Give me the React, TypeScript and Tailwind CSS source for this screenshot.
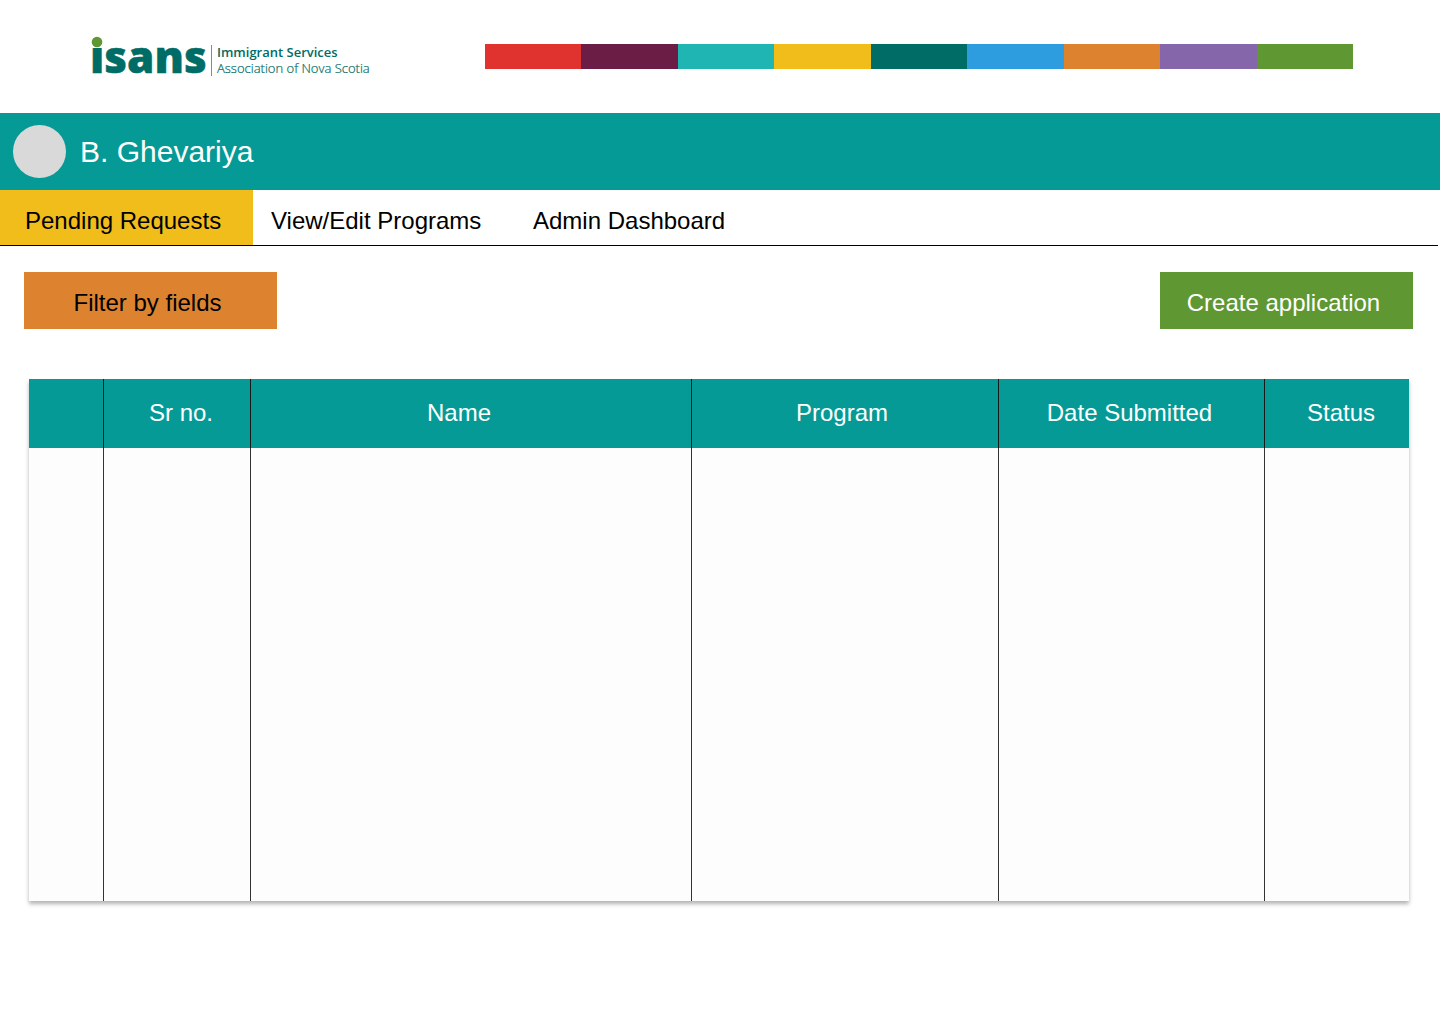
import React from "react";

const stripColors = [
  "bg-[#e0332f]",
  "bg-[#6c1d45]",
  "bg-[#1fb5b3]",
  "bg-[#f0bd1a]",
  "bg-[#006c66]",
  "bg-[#2d9de0]",
  "bg-[#dd8330]",
  "bg-[#8666aa]",
  "bg-[#5f9732]",
];

const columns = [
  { title: "", width: "w-[75px]", pad: "" },
  { title: "Sr no.", width: "w-[147px]", pad: "pl-2" },
  { title: "Name", width: "", pad: "pr-6" },
  { title: "Program", width: "w-[307px]", pad: "pr-1.5" },
  { title: "Date Submitted", width: "w-[266px]", pad: "pr-1" },
  { title: "Status", width: "w-[144px]", pad: "pl-2" },
];

function Logo() {
  return (
    <svg
      viewBox="0 0 280 60"
      className="h-[60px] w-[280px] shrink-0 overflow-visible"
      role="img"
      aria-label="isans, Immigrant Services Association of Nova Scotia"
    >
      <text
        x="-1"
        y="46"
        fill="#006c66"
        stroke="#006c66"
        strokeWidth="0.5"
        fontSize="44"
        fontWeight="800"
        fontFamily="'Open Sans', 'Noto Sans', sans-serif"
      >
        isans
      </text>
      <rect x="0" y="8" width="13" height="13" fill="#ffffff" />
      <circle cx="6" cy="15" r="5.3" fill="#5f9732" />
      <rect x="120" y="18" width="1" height="31" fill="#5f9c98" />
      <text
        x="126"
        y="30"
        fill="#006c66"
        fontSize="13"
        fontWeight="600"
        fontFamily="'Open Sans', 'Noto Sans', sans-serif"
      >
        Immigrant Services
      </text>
      <text
        x="126"
        y="46"
        fill="#006c66"
        stroke="#006c66"
        strokeWidth="0.2"
        fontSize="13"
        fontWeight="300"
        fontFamily="'Open Sans', 'Noto Sans', sans-serif"
      >
        Association of Nova Scotia
      </text>
    </svg>
  );
}

export default function App() {
  return (
    <div className="min-h-screen bg-white font-['Liberation_Sans',Arial,sans-serif] text-2xl text-black">
      <header className="flex h-[113px] items-center pr-[87px] pl-[91px]">
        <Logo />
        <div className="ml-[114px] flex h-[25px] flex-1">
          {stripColors.map((color) => (
            <div key={color} className={`flex-1 ${color}`} />
          ))}
        </div>
      </header>

      <section className="flex h-[77px] items-center gap-[14px] bg-[#069a96] px-[13px] text-white">
        <div className="size-[53px] rounded-full bg-[#d9d9d9]" />
        <h1 className="text-3xl">B. Ghevariya</h1>
      </section>

      <nav className="mr-0.5 flex h-14 border-b border-black">
        <a href="#pending" aria-current="page" className="flex w-[253px] items-center bg-[#f0bd1a] pt-1.5 pl-[25px]">
          Pending Requests
        </a>
        <a href="#programs" className="flex w-[262px] items-center pt-1.5 pl-[18px]">
          View/Edit Programs
        </a>
        <a href="#dashboard" className="flex items-center pt-1.5 pl-[18px]">
          Admin Dashboard
        </a>
      </nav>

      <main>
        <div className="mt-[26px] flex justify-between pr-[27px] pl-6">
          <button type="button" className="h-[57px] w-[253px] bg-[#dd8330] pt-1 pr-1.5">
            Filter by fields
          </button>
          <button type="button" className="h-[57px] w-[253px] bg-[#5f9732] pt-1 pr-1.5 text-white">
            Create application
          </button>
        </div>

        <div className="mt-[50px] mr-[31px] ml-[29px] bg-[#fdfdfd] shadow-[0_3px_4px_rgba(0,0,0,0.3)]">
          <table className="w-full table-fixed border-separate border-spacing-0">
            <thead>
              <tr className="h-[69px] bg-[#069a96] text-white">
                {columns.map((c) => (
                  <th
                    key={c.title}
                    scope="col"
                    className={`border-r border-[#1a1a1a] pb-0.5 text-center font-normal last:border-r-0 ${c.width} ${c.pad}`}
                  >
                    {c.title}
                  </th>
                ))}
              </tr>
            </thead>
            <tbody>
              <tr className="h-[453px]">
                {columns.map((c) => (
                  <td key={c.title} className="border-r border-[#333333] last:border-r-0" />
                ))}
              </tr>
            </tbody>
          </table>
        </div>
      </main>
    </div>
  );
}
